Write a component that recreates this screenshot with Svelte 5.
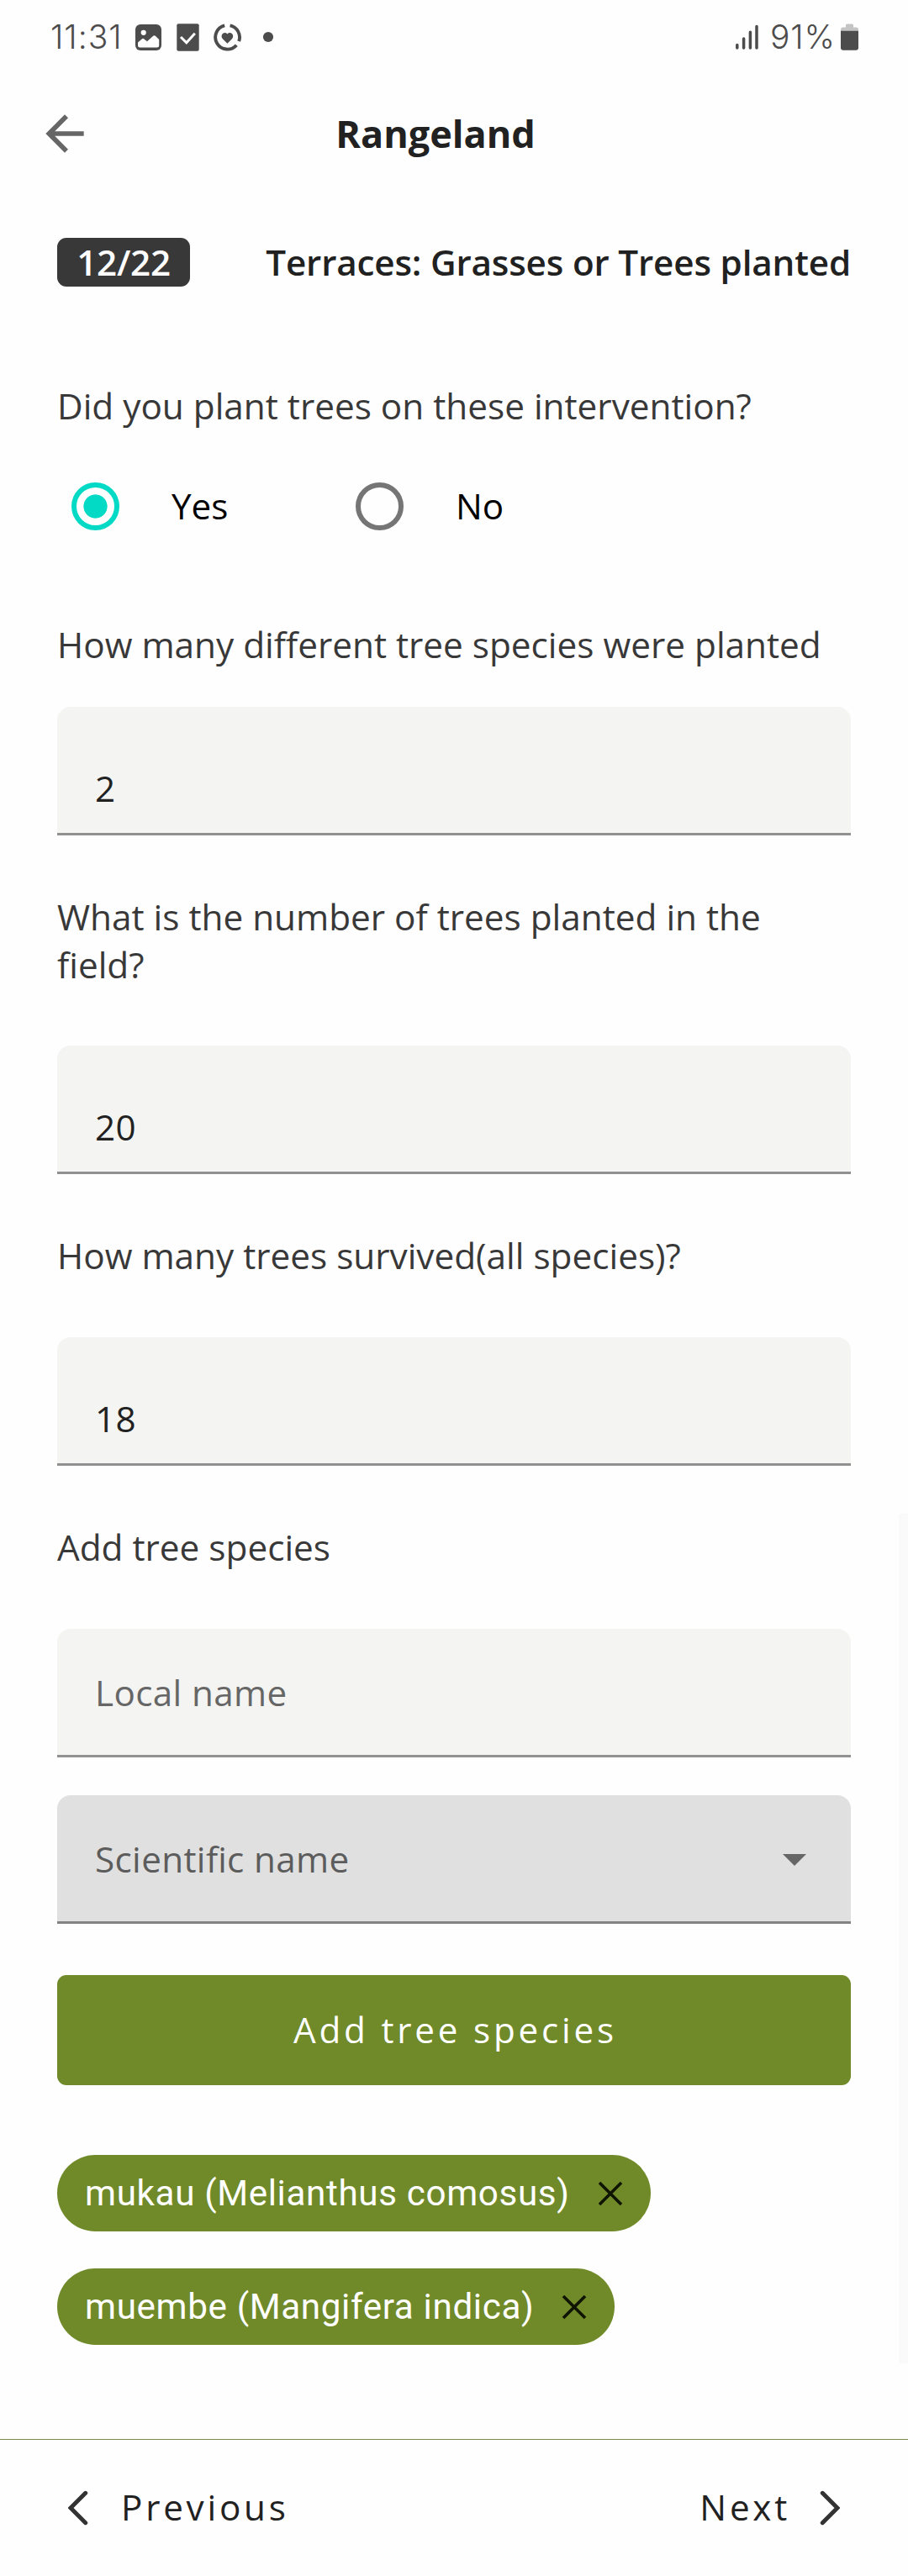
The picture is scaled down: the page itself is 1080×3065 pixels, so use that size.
<script>
  let planted = $state('yes');
  let speciesCount = $state('2');
  let treeCount = $state('20');
  let survived = $state('18');
  let localName = $state('');
  let chips = $state(['mukau (Melianthus comosus)', 'muembe (Mangifera indica)']);

  function removeChip(name) {
    chips = chips.filter((c) => c !== name);
  }
</script>

<div class="screen">
  <div class="status">
    <span class="clock">11:31</span>
    <svg class="notifs" width="170" height="36" viewBox="158 26 170 36">
      <rect x="161" y="29" width="31" height="31" rx="6" fill="#4c4c4c" />
      <circle cx="170.7" cy="38.8" r="3.1" fill="#fefefe" />
      <path d="M164 50.5l5-4.2q1.2-.9 2.4.1l3.6 2.9 7.2-6.6q1.3-1 2.6 0l4.4 4.2v7.3q0 2.4-2.4 2.4h-20.400q-2.400 0-2.400-2.400z" fill="#fefefe" />
      <rect x="210.300" y="28.300" width="26.400" height="32.500" rx="2" fill="#4c4c4c" />
      <path d="M215 44l6.800 6.800 10-11" fill="none" stroke="#fefefe" stroke-width="3" />
      <path d="M273.600 30.400A14.300 14.300 0 0 1 284.200 49.200M281.300 53.700A14.300 14.300 0 1 1 267.200 30.400" fill="none" stroke="#4c4c4c" stroke-width="3.900" />
      <path d="M270.400 51.700l-5.300-5.200c-4.200-4.200 1.300-10.400 5.300-6 4-4.400 9.500 1.800 5.300 6z" fill="#4c4c4c" />
      <circle cx="319" cy="44" r="6.100" fill="#4c4c4c" />
    </svg>
    <svg class="signal" width="28" height="30" viewBox="875 28 28 30">
      <path d="M876.800 52.600v3.500M884.600 45v11.100M892.400 37.200v18.900M900 30.500v25.600" fill="none" stroke="#4c4c4c" stroke-width="3.500" stroke-linecap="round" />
    </svg>
    <span class="percent">91%</span>
    <svg class="battery" width="21" height="32" viewBox="0 0 21 32">
      <path d="M6 2q0-1.500 1.500-1.500h6q1.500 0 1.500 1.500v2.500h3q3 0 3 3v2h-21v-2q0-3 3-3h3z" fill="#c4c4c4" />
      <path d="M0 8.700h21v20q0 3-3 3h-15q-3 0-3-3z" fill="#4c4c4c" />
    </svg>
  </div>

  <header>
    <button class="back" aria-label="Back">
      <svg width="68" height="68" viewBox="0 0 24 24"><path d="M20 11H7.830l5.590-5.590L12 4l-8 8 8 8 1.410-1.410L7.830 13H20v-2z" fill="#666" /></svg>
    </button>
    <h1>Rangeland</h1>
  </header>

  <main>
    <div class="progress">
      <span class="badge">12/22</span>
      <h2>Terraces: Grasses or Trees planted</h2>
    </div>

    <p class="q q-first">Did you plant trees on these intervention?</p>
    <div class="radios">
      <label><input type="radio" name="planted" value="yes" bind:group={planted} /><span>Yes</span></label>
      <label><input type="radio" name="planted" value="no" bind:group={planted} /><span>No</span></label>
    </div>

    <p class="q q-species">How many different tree species were planted</p>
    <input class="field filled close" aria-label="Species count" bind:value={speciesCount} />

    <p class="q">What is the number of trees planted in the field?</p>
    <input class="field filled" aria-label="Tree count" bind:value={treeCount} />

    <p class="q">How many trees survived(all species)?</p>
    <input class="field filled lower" aria-label="Survived count" bind:value={survived} />

    <p class="q">Add tree species</p>
    <input class="field lower" placeholder="Local name" bind:value={localName} />
    <div class="field select" role="button" tabindex="0">
      <span>Scientific name</span>
      <svg width="28" height="17" viewBox="0 0 28 17"><path d="M0 3h28l-14 14z" fill="#666" /></svg>
    </div>

    <button class="add">Add tree species</button>

    <div class="chips">
      {#each chips as chip (chip)}
        <div class="chip">
          <span>{chip}</span>
          <button aria-label="Remove" onclick={() => removeChip(chip)}>
            <svg width="30" height="30" viewBox="0 0 30 30"><path d="M2 2l26 26M28 2l-26 26" stroke="#0f1400" stroke-width="3.600" /></svg>
          </button>
        </div>
      {/each}
    </div>
    <div class="scrollbar"></div>
  </main>

  <footer>
    <button>
      <svg width="24" height="42" viewBox="0 0 24 42"><path d="M20.700 3.300L3 21l17.700 17.700" fill="none" stroke="#333" stroke-width="5" stroke-linecap="round" /></svg>
      <span>Previous</span>
    </button>
    <button class="next">
      <span>Next</span>
      <svg width="24" height="42" viewBox="0 0 24 42"><path d="M3.300 3.300L21 21l-17.700 17.700" fill="none" stroke="#333" stroke-width="5" stroke-linecap="round" /></svg>
    </button>
  </footer>
</div>

<style>
  :global(body) {
    margin: 0;
    background: #fefefe;
  }
  .screen {
    position: relative;
    width: 1080px;
    height: 3065px;
    display: flex;
    flex-direction: column;
    box-sizing: border-box;
    overflow: hidden;
    background: #fefefe;
    color: #212121;
    font: 400 42.19px/57px 'Open Sans', sans-serif;
  }
  button {
    border: 0;
    padding: 0;
    background: none;
    color: inherit;
    font: inherit;
  }
  svg {
    display: block;
    flex: none;
  }

  .status {
    display: flex;
    align-items: center;
    height: 88px;
    padding: 0 59px 0 60px;
    color: #4c4c4c;
    font: 300 39px/48px Inter, sans-serif;
  }
  .clock {
    width: 98px;
    letter-spacing: 1px;
  }
  .signal {
    margin-left: auto;
    margin-right: 13px;
  }
  .percent {
    width: 84px;
    letter-spacing: 0.8px;
  }

  header {
    display: grid;
    grid-template-columns: 140px 1fr 140px;
    align-items: center;
    height: 141px;
  }
  .back {
    margin-left: 43px;
    justify-self: start;
  }
  h1 {
    margin: 0;
    padding-right: 44px;
    text-align: center;
    font: 700 45px/61px 'Open Sans', sans-serif;
  }

  main {
    position: relative;
    flex: 1;
    padding: 54px 68px 0;
  }
  .progress {
    display: flex;
    justify-content: space-between;
    align-items: flex-start;
    height: 58px;
    font-weight: 600;
  }
  .badge {
    width: 158px;
    height: 58px;
    padding-bottom: 1px;
    box-sizing: border-box;
    border-radius: 11px;
    background: #383838;
    color: #fff;
    text-align: center;
    letter-spacing: -0.3px;
  }
  h2 {
    margin: 0;
    font: inherit;
    letter-spacing: -0.16px;
  }

  .q {
    margin: 68px 0;
    color: #383838;
    font-size: 42.3px;
  }
  .q-first {
    margin: 113px 0 62px;
  }
  .q-species {
    margin-top: 107px;
    margin-bottom: 46px;
  }
  .radios {
    display: flex;
    height: 58px;
    color: #000;
  }
  label {
    display: flex;
    align-items: center;
    width: 338px;
    padding-left: 17px;
    box-sizing: border-box;
  }
  label span {
    margin-left: 62px;
    padding-bottom: 2px;
  }
  label input {
    appearance: none;
    flex: none;
    width: 57px;
    height: 57px;
    margin: 0;
    border: 6px solid #757575;
    border-radius: 50%;
    box-sizing: border-box;
  }
  label input:checked {
    border-color: #03dac5;
    background: radial-gradient(circle, #03dac5 13.700px, transparent 14.500px);
  }

  .field {
    display: block;
    width: 944px;
    height: 153px;
    margin: 0;
    padding: 0 45px;
    box-sizing: border-box;
    border: 0;
    border-bottom: 3px solid #909090;
    border-radius: 16px 16px 0 0;
    background: #f4f4f2;
    color: #212121;
    font: inherit;
    letter-spacing: 0.38px;
    font-feature-settings: 'liga' 1;
    outline: none;
  }
  .filled {
    padding-top: 43px;
  }
  .lower {
    margin-top: 69px;
  }
  .field::placeholder {
    color: #666;
    opacity: 1;
  }
  .select {
    display: flex;
    align-items: center;
    justify-content: space-between;
    margin-top: 45px;
    padding-right: 53px;
    border-bottom-color: #828282;
    background: #e0e0e0;
    color: #5c5c5c;
  }

  .add {
    display: block;
    width: 944px;
    height: 131px;
    margin-top: 61px;
    padding: 0 0 2px 3px;
    border-radius: 11px;
    background: #708a29;
    color: #fff;
    letter-spacing: 3.8px;
  }
  .chips {
    display: flex;
    flex-direction: column;
    align-items: flex-start;
    gap: 44px;
    margin-top: 83px;
  }
  .chip {
    display: flex;
    align-items: center;
    gap: 33px;
    height: 91px;
    padding: 0 33px 0 33px;
    border-radius: 46px;
    background: #708a29;
    color: #fff;
    font-family: Roboto, sans-serif;
    letter-spacing: 0.64px;
  }
  .scrollbar {
    position: absolute;
    top: 1572px;
    right: 0;
    width: 11px;
    height: 1011px;
    background: #fafafa;
  }

  footer {
    display: flex;
    justify-content: space-between;
    height: 163px;
    padding: 0 81px;
    box-sizing: border-box;
    border-top: 1px solid #7a8a4c;
    letter-spacing: 3.77px;
  }
  footer button {
    display: flex;
    align-items: center;
    gap: 39px;
    padding-bottom: 1px;
    letter-spacing: inherit;
  }
  footer span {
    padding-bottom: 2px;
  }
  footer .next {
    gap: 35px;
  }
</style>
